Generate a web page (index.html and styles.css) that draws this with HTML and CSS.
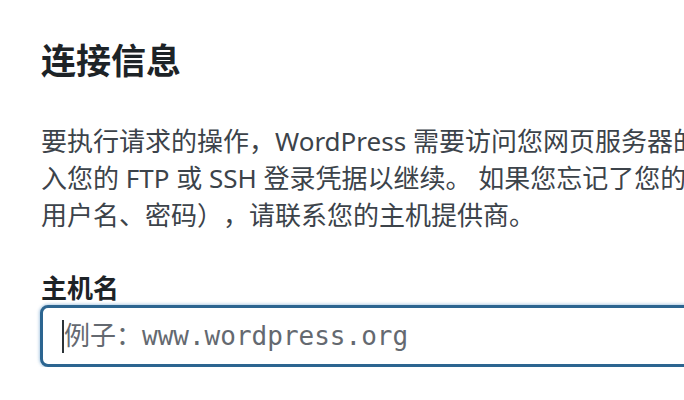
FILE: index.html
```html
<!DOCTYPE html>
<html lang="zh-CN">
<head>
    <meta charset="UTF-8">
    <meta name="viewport" content="width=device-width, initial-scale=1.0">
    <title>连接信息</title>
    <link rel="stylesheet" href="styles.css">
</head>
<body>

    <div class="request-filesystem">
        <h2 class="dialog-title">连接信息</h2>

        <p class="dialog-desc">要执行请求的操作，WordPress 需要访问您网页服务器的权限。请输<br>入您的 FTP 或 SSH 登录凭据以继续。 如果您忘记了您的登录凭据（如<br>用户名、密码），请联系您的主机提供商。</p>

        <label class="field-label" for="hostname">主机名</label>
        <div class="field-wrap">
            <input class="code" type="text" id="hostname" placeholder="例子：www.wordpress.org">
            <span class="caret"></span>
        </div>
    </div>

</body>
</html>
```

FILE: styles.css
```css
body {
    margin: 0;
    background-color: #fff;
    overflow: hidden;
    font-family: "Noto Sans", "Noto Sans CJK SC", sans-serif;
    text-spacing-trim: space-all;
}
.request-filesystem {
    width: 1000px;
    padding: 41px 0 0 41px;
}
.dialog-title {
    margin: 0;
    font-size: 35px;
    line-height: 40px;
    font-weight: 700;
    color: #1d2327;
}
.dialog-desc {
    margin: 42px 0 0;
    font-size: 26px;
    line-height: 37px;
    color: #3c434a;
    white-space: nowrap;
}
.field-label {
    display: block;
    margin-top: 39px;
    font-size: 26px;
    line-height: 30px;
    font-weight: 700;
    color: #1d2327;
}
.field-wrap {
    position: relative;
    margin: 2px 0 0 -1px;
}
input.code {
    box-sizing: border-box;
    width: 900px;
    height: 62px;
    padding: 0 0 0 21px;
    border: 3px solid #2c6590;
    border-radius: 8px;
    box-shadow: 0 0 3px 1px rgba(34, 113, 177, 0.35);
    outline: none;
    font-family: "DejaVu Sans Mono", "Noto Sans CJK SC", monospace;
    font-size: 26px;
    color: #2c3338;
    background: #fff;
}
input.code::placeholder {
    color: #646970;
}
.caret {
    position: absolute;
    left: 22px;
    top: 15px;
    width: 2px;
    height: 33px;
    background: #2c3338;
}
```
